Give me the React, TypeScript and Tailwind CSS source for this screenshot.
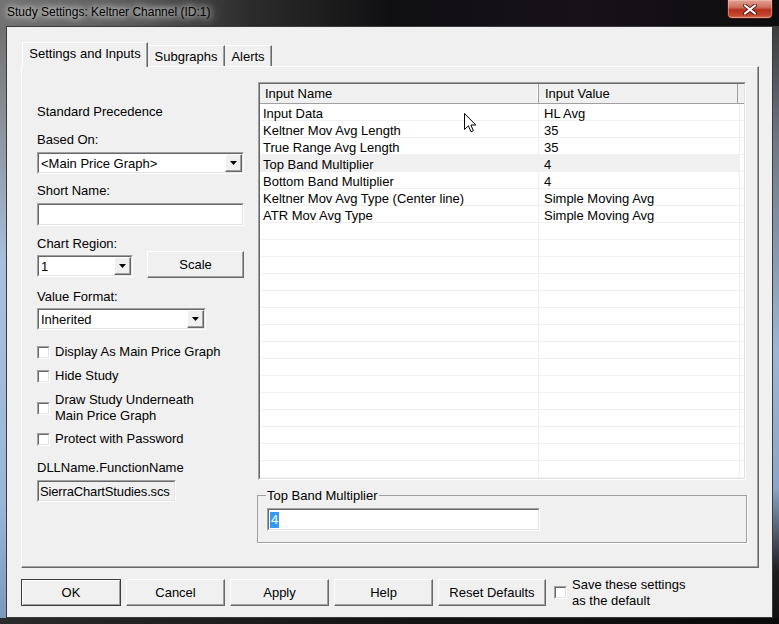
import React from 'react';

const raised =
  'border border-t-white border-l-white border-r-[#696969] border-b-[#696969] shadow-[inset_-1px_-1px_0_#a0a0a0]';

const rows: [string, string][] = [
  ['Input Data', 'HL Avg'],
  ['Keltner Mov Avg Length', '35'],
  ['True Range Avg Length', '35'],
  ['Top Band Multiplier', '4'],
  ['Bottom Band Multiplier', '4'],
  ['Keltner Mov Avg Type (Center line)', 'Simple Moving Avg'],
  ['ATR Mov Avg Type', 'Simple Moving Avg'],
];

const gridRows: [string, string][] = [
  ...rows,
  ...Array.from({ length: 15 }, () => ['', ''] as [string, string]),
];

// classic 3d sunken frame: two nested borders
function Sunken({ className, inner, children }: { className: string; inner?: string; children?: React.ReactNode }) {
  return (
    <div className={`border border-t-[#a0a0a0] border-l-[#a0a0a0] border-r-white border-b-white ${className}`}>
      <div className={`h-full w-full border border-t-[#696969] border-l-[#696969] border-r-[#e3e3e3] border-b-[#e3e3e3] ${inner ?? 'bg-white'}`}>
        {children}
      </div>
    </div>
  );
}

function DropDown({ width, value }: { width: string; value: string }) {
  return (
    <Sunken className={`h-[22px] ${width}`}>
      <div className="flex h-full">
        <span className="flex-1 truncate pl-[2px] leading-[19px]">{value}</span>
        <span className={`flex w-[17px] items-center justify-center bg-[#f0f0f0] ${raised}`}>
          <svg width="7" height="4" viewBox="0 0 7 4">
            <path d="M0 0h7L3.5 4z" fill="#000" />
          </svg>
        </span>
      </div>
    </Sunken>
  );
}

function CheckBox() {
  return <Sunken className="h-[13px] w-[13px] shrink-0" />;
}

function Check({ label, className }: { label: React.ReactNode; className: string }) {
  return (
    <div className={`flex items-center gap-[5px] leading-[16px] ${className}`}>
      <CheckBox />
      <span>{label}</span>
    </div>
  );
}

function Button({ label, width, isDefault }: { label: string; width: string; isDefault?: boolean }) {
  return (
    <div
      className={`flex h-[27px] items-center justify-center bg-[#f0f0f0] ${width} ${
        isDefault
          ? 'border border-[#3c3c3c] shadow-[inset_1px_1px_0_#fff,inset_-1px_-1px_0_#a0a0a0]'
          : raised
      }`}
    >
      {label}
    </div>
  );
}

export default function App() {
  return (
    <div className="flex h-[624px] w-[779px] flex-col overflow-hidden font-['Liberation_Sans',Arial,sans-serif] text-[13px] text-black">
      {/* Title bar */}
      <div className="flex h-[26px] shrink-0 justify-between bg-[linear-gradient(90deg,#727272_0%,#5c5c5c_16%,#2c2c2c_32%,#101012_50%,#17111a_75%,#0d0d0d_100%)]">
        <div className="pl-[7px] pt-[5px] text-[12px] leading-[15px] [text-shadow:0_0_6px_#fff,0_0_10px_#ccc,0_0_14px_#aaa]">
          Study Settings: Keltner Channel (ID:1)
        </div>
        <div className="mr-[6px] flex h-[19px] w-[46px] items-center justify-center rounded-b-[5px] border border-t-0 border-[#40140e] bg-[linear-gradient(#e2a394_0%,#d0705e_40%,#b7301c_55%,#c4462c_85%,#d87a5a_100%)] shadow-[inset_0_0_0_1px_rgba(255,200,190,0.45)]">
          <svg width="14" height="11" viewBox="0 0 14 11">
            <path d="M2 1.5l10 8M12 1.5l-10 8" stroke="#5a1a10" strokeWidth="4" strokeLinecap="round" />
            <path d="M2 1.5l10 8M12 1.5l-10 8" stroke="#fff" strokeWidth="2.2" strokeLinecap="round" />
          </svg>
        </div>
      </div>

      {/* Frame + client */}
      <div className="flex h-[592px] shrink-0">
        <div className="w-[6px] bg-[linear-gradient(#707070_0%,#8a8f96_15%,#a9bfdc_40%,#9db6d6_80%,#7e98bb_100%)]" />
        <div className="flex w-[767px] flex-col border border-[#3a3a3a] bg-[#f0f0f0] pl-[14px] pt-[15px]">
          {/* Tabs */}
          <div className="flex h-[24px] items-end pl-[1px]">
            <div className="relative z-10 -mb-px flex h-[25px] w-[126px] items-center justify-center border border-b-0 border-t-white border-l-white border-r-[#696969] bg-[#f0f0f0] pb-[2px] shadow-[inset_-1px_0_0_#a0a0a0]">
              Settings and Inputs
            </div>
            <div className="flex h-[21px] w-[77px] items-center justify-center border border-b-0 border-t-white border-l-0 border-r-[#696969] bg-[#f0f0f0] pt-[1px] shadow-[inset_-1px_0_0_#a0a0a0]">
              Subgraphs
            </div>
            <div className="flex h-[21px] w-[47px] items-center justify-center border border-b-0 border-t-white border-l-0 border-r-[#696969] bg-[#f0f0f0] pt-[1px] shadow-[inset_-1px_0_0_#a0a0a0]">
              Alerts
            </div>
          </div>

          {/* Tab panel */}
          <div className={`flex h-[502px] w-[738px] ${raised} bg-[#f0f0f0]`}>
            {/* Left column */}
            <div className="flex w-[222px] flex-col pl-[15px] leading-[15px]">
              <div className="mt-[37px] h-[15px]">Standard Precedence</div>
              <div className="mt-[13px] h-[15px]">Based On:</div>
              <div className="mt-[5px]">
                <DropDown width="w-[207px]" value="<Main Price Graph>" />
              </div>
              <div className="mt-[9px] h-[15px]">Short Name:</div>
              <div className="mt-[5px]">
                <Sunken className="h-[23px] w-[207px]" />
              </div>
              <div className="mt-[10px] h-[15px]">Chart Region:</div>
              <div className="flex h-[27px] items-start">
                <div className="mt-[4px]">
                  <DropDown width="w-[96px]" value="1" />
                </div>
                <div className="ml-[14px]">
                  <Button label="Scale" width="w-[97px]" />
                </div>
              </div>
              <div className="mt-[11px] h-[15px]">Value Format:</div>
              <div className="mt-[4px]">
                <DropDown width="w-[169px]" value="Inherited" />
              </div>
              <Check className="mt-[14px] h-[16px]" label="Display As Main Price Graph" />
              <Check className="mt-[8px] h-[16px]" label="Hide Study" />
              <Check
                className="mt-[8px] h-[32px]"
                label={
                  <>
                    Draw Study Underneath
                    <br />
                    Main Price Graph
                  </>
                }
              />
              <Check className="mt-[7px] h-[16px]" label="Protect with Password" />
              <div className="mt-[13px] h-[15px]">DLLName.FunctionName</div>
              <div className="mt-[5px]">
                <Sunken className="h-[22px] w-[139px]" inner="bg-[#f0f0f0] overflow-hidden">
                  <div className="whitespace-nowrap pl-[1px] leading-[19px] tracking-[-0.15px]">SierraChartStudies.scs</div>
                </Sunken>
              </div>
            </div>

            {/* Right column */}
            <div className="ml-[13px] flex flex-col pt-[15px]">
              <Sunken className="relative ml-[1px] h-[398px] w-[488px]" inner="bg-white overflow-hidden">
                <div className="flex h-[20px] border-b border-[#a0a0a0] bg-[#f0f0f0] leading-[19px]">
                  <div className="w-[279px] border-r border-[#a0a0a0] pl-[5px] shadow-[inset_-1px_0_0_#fff]">Input Name</div>
                  <div className="w-[199px] border-r border-[#a0a0a0] pl-[6px]">Input Value</div>
                  <div className="flex-1" />
                </div>
                {gridRows.map(([name, value], i) => {
                  const sel = i === 3;
                  return (
                    <div key={i} className="flex h-[17px] leading-[19px]">
                      <div className={`w-[279px] border-r border-b border-[#f0f0f0] pl-[3px] ${sel ? 'bg-[#f0f0f0]' : ''}`}>
                        {name}
                      </div>
                      <div className={`w-[201px] border-r border-b border-[#f0f0f0] pl-[5px] ${sel ? 'bg-[#f0f0f0]' : ''}`}>
                        {value}
                      </div>
                      <div className="flex-1 border-b border-[#f0f0f0]" />
                    </div>
                  );
                })}
                {/* mouse pointer */}
                <svg className="absolute left-[205px] top-[30px]" width="13" height="20" viewBox="0 0 13 20">
                  <path
                    d="M0.5 0.5V16.5L4.4 12.8L7 18.8L9.4 17.8L6.9 12H11.8Z"
                    fill="#fff"
                    stroke="#000"
                    strokeWidth="1"
                    strokeLinejoin="round"
                  />
                </svg>
              </Sunken>

              <fieldset className="mt-[8px] h-[55px] w-[490px] border border-[#a0a0a0] px-[9px] pb-[10px] shadow-[1px_1px_0_#fff]">
                <legend className="-ml-[1px] px-[1px] leading-[15px]">Top Band Multiplier</legend>
                <div className="mt-[5px]">
                  <Sunken className="h-[23px] w-[273px]">
                    <div className="flex h-full items-center pl-[1px]">
                      <span className="bg-[#3399ff] px-[1px] leading-[16px] text-white">4</span>
                    </div>
                  </Sunken>
                </div>
              </fieldset>
            </div>
          </div>

          {/* Bottom buttons */}
          <div className="mt-[11px] flex h-[27px] items-center">
            <Button label="OK" width="w-[100px]" isDefault />
            <div className="ml-[5px]">
              <Button label="Cancel" width="w-[99px]" />
            </div>
            <div className="ml-[5px]">
              <Button label="Apply" width="w-[99px]" />
            </div>
            <div className="ml-[5px]">
              <Button label="Help" width="w-[99px]" />
            </div>
            <div className="ml-[5px]">
              <Button label="Reset Defaults" width="w-[108px]" />
            </div>
            <Check
              className="ml-[8px] h-[32px]"
              label={
                <>
                  Save these settings
                  <br />
                  as the default
                </>
              }
            />
          </div>
        </div>
        <div className="w-[6px] bg-[linear-gradient(#3c3c3c_0%,#707a86_20%,#9db6d6_55%,#8aa6ca_78%,#1e1e1e_92%,#111_100%)]" />
      </div>
      <div className="h-[6px] shrink-0 bg-[linear-gradient(90deg,#2a2a2a,#141414_50%,#0a0a0a)]" />
    </div>
  );
}
